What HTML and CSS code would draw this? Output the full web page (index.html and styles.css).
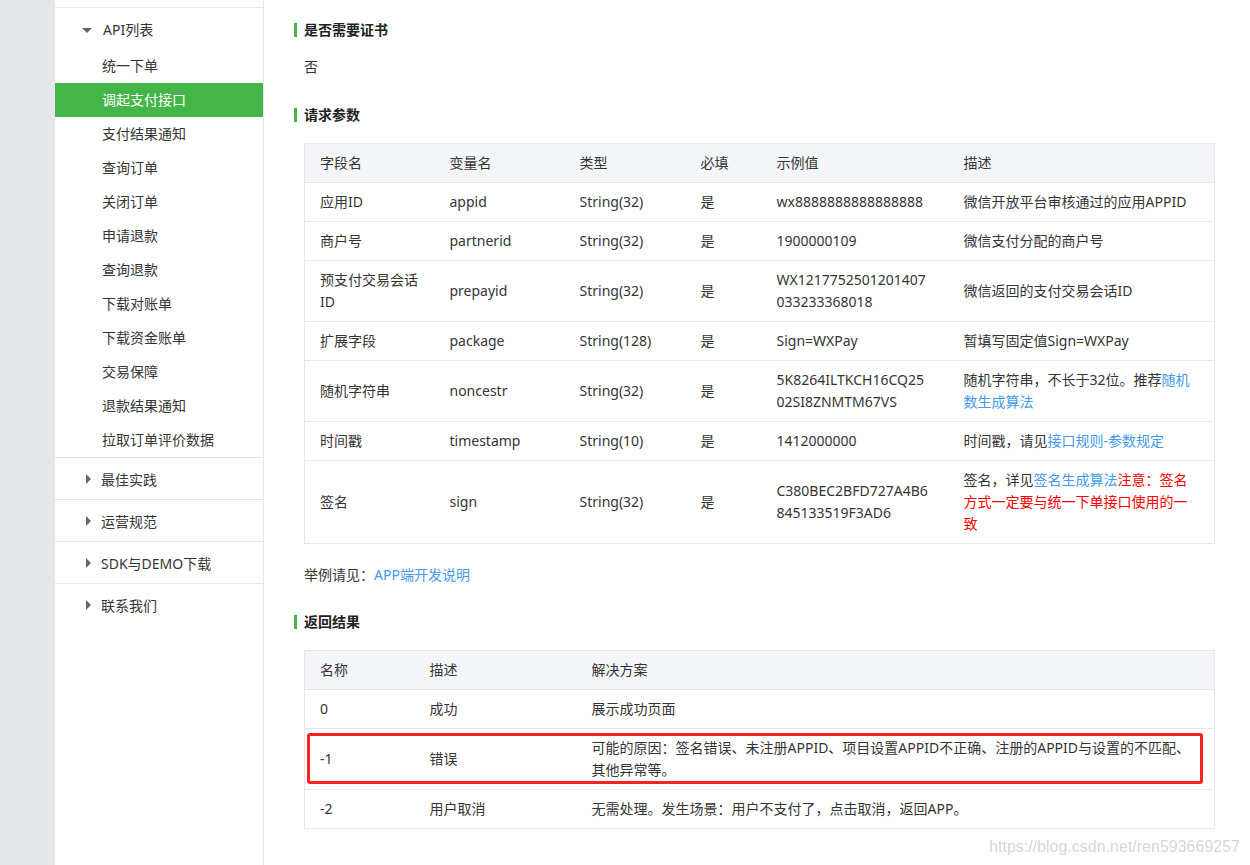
FILE: index.html
```html
<!DOCTYPE html>
<html lang="zh-CN">
<head>
<meta charset="utf-8">
<title>调起支付接口</title>
<link rel="stylesheet" href="styles.css">
</head>
<body>
<div class="page">
  <div class="rail"></div>
  <nav class="sidebar">
    <div class="nav-top"></div>
    <div class="nav-group open">
      <div class="nav-title"><span class="caret caret-down"></span>API列表</div>
      <ul class="nav-items">
        <li>统一下单</li>
        <li class="active">调起支付接口</li>
        <li>支付结果通知</li>
        <li>查询订单</li>
        <li>关闭订单</li>
        <li>申请退款</li>
        <li>查询退款</li>
        <li>下载对账单</li>
        <li>下载资金账单</li>
        <li>交易保障</li>
        <li>退款结果通知</li>
        <li>拉取订单评价数据</li>
      </ul>
    </div>
    <div class="nav-group"><div class="nav-title closed"><span class="caret caret-right"></span>最佳实践</div></div>
    <div class="nav-group"><div class="nav-title closed"><span class="caret caret-right"></span>运营规范</div></div>
    <div class="nav-group"><div class="nav-title closed"><span class="caret caret-right"></span>SDK与DEMO下载</div></div>
    <div class="nav-group last"><div class="nav-title closed"><span class="caret caret-right"></span>联系我们</div></div>
  </nav>
  <main class="content">
    <h3 class="sec-title">是否需要证书</h3>
    <p class="text">否</p>

    <h3 class="sec-title sec-gap">请求参数</h3>
    <div class="table-wrap">
      <table class="doc-table params">
        <colgroup>
          <col class="c1"><col class="c2"><col class="c3"><col class="c4"><col class="c5"><col class="c6">
        </colgroup>
        <thead>
          <tr><th>字段名</th><th>变量名</th><th>类型</th><th>必填</th><th>示例值</th><th>描述</th></tr>
        </thead>
        <tbody>
          <tr><td>应用ID</td><td>appid</td><td>String(32)</td><td>是</td><td>wx8888888888888888</td><td>微信开放平台审核通过的应用APPID</td></tr>
          <tr><td>商户号</td><td>partnerid</td><td>String(32)</td><td>是</td><td>1900000109</td><td>微信支付分配的商户号</td></tr>
          <tr><td>预支付交易会话ID</td><td>prepayid</td><td>String(32)</td><td>是</td><td>WX1217752501201407<br>033233368018</td><td>微信返回的支付交易会话ID</td></tr>
          <tr><td>扩展字段</td><td>package</td><td>String(128)</td><td>是</td><td>Sign=WXPay</td><td>暂填写固定值Sign=WXPay</td></tr>
          <tr><td>随机字符串</td><td>noncestr</td><td>String(32)</td><td>是</td><td>5K8264ILTKCH16CQ25<br>02SI8ZNMTM67VS</td><td>随机字符串，不长于32位。推荐<a class="link" href="#">随机数生成算法</a></td></tr>
          <tr><td>时间戳</td><td>timestamp</td><td>String(10)</td><td>是</td><td>1412000000</td><td>时间戳，请见<a class="link" href="#">接口规则-参数规定</a></td></tr>
          <tr><td>签名</td><td>sign</td><td>String(32)</td><td>是</td><td>C380BEC2BFD727A4B6<br>845133519F3AD6</td><td>签名，详见<a class="link" href="#">签名生成算法</a><span class="warn">注意：签名方式一定要与统一下单接口使用的一致</span></td></tr>
        </tbody>
      </table>
    </div>

    <p class="text note">举例请见：<a class="link" href="#">APP端开发说明</a></p>

    <h3 class="sec-title sec-gap2">返回结果</h3>
    <div class="table-wrap">
      <table class="doc-table results">
        <colgroup>
          <col class="r1"><col class="r2"><col class="r3">
        </colgroup>
        <thead>
          <tr><th>名称</th><th>描述</th><th>解决方案</th></tr>
        </thead>
        <tbody>
          <tr><td>0</td><td>成功</td><td>展示成功页面</td></tr>
          <tr><td>-1</td><td>错误</td><td>可能的原因：签名错误、未注册APPID、项目设置APPID不正确、注册的APPID与设置的不匹配、其他异常等。</td></tr>
          <tr><td>-2</td><td>用户取消</td><td>无需处理。发生场景：用户不支付了，点击取消，返回APP。</td></tr>
        </tbody>
      </table>
      <div class="highlight-box"></div>
    </div>
  </main>
</div>
<div class="watermark">https://blog.csdn.net/ren593669257</div>
</body>
</html>
```

FILE: styles.css
```css
* { box-sizing: border-box; }

html, body {
  margin: 0;
  padding: 0;
  background: #ffffff;
}

body {
  font-family: "Noto Sans", "Noto Sans CJK SC", sans-serif;
  font-size: 14px;
  color: #353535;
  overflow: hidden;
}

.page {
  display: flex;
  min-height: 865px;
}

.rail {
  width: 55px;
  flex: 0 0 55px;
  background: #e6e7eb;
}

.sidebar {
  width: 209px;
  flex: 0 0 209px;
  border-right: 1px solid #e6e6e6;
  background: #fff;
}

.nav-top {
  height: 8px;
  border-bottom: 1px solid #e6e6e6;
}

.nav-group {
  border-bottom: 1px solid #e6e6e6;
}

.nav-group.last {
  border-bottom: none;
}

.nav-title {
  display: flex;
  align-items: center;
  height: 41px;
  padding-left: 27px;
  color: #353535;
}

.nav-title.closed {
  padding-left: 31px;
}

.caret {
  display: inline-block;
  width: 0;
  height: 0;
}

.caret-down {
  border-left: 5px solid transparent;
  border-right: 5px solid transparent;
  border-top: 5px solid #666;
  margin-right: 11px;
  margin-top: 3px;
}

.caret-right {
  border-top: 5px solid transparent;
  border-bottom: 5px solid transparent;
  border-left: 5px solid #666;
  margin-right: 10px;
  margin-top: 1px;
}

.nav-items {
  list-style: none;
  margin: 0;
  padding: 0;
}

.nav-items li {
  height: 34px;
  line-height: 34px;
  padding-left: 47px;
  color: #353535;
  white-space: nowrap;
}

.nav-items li.active {
  background: #44b549;
  color: #fff;
}

.content {
  flex: 1;
  padding: 19px 36px 0 30px;
}

.sec-title {
  display: flex;
  align-items: center;
  margin: 0;
  font-size: 14px;
  line-height: 22px;
  font-weight: bold;
  color: #222;
}

.sec-title::before {
  content: "";
  width: 3px;
  height: 14px;
  background: #44b549;
  margin-right: 7px;
}

.sec-gap { margin-top: 26px; }
.sec-gap2 { margin-top: 25px; }

.text {
  margin: 15px 0 0 10px;
  line-height: 22px;
}

.note {
  margin-top: 20px;
}

.link {
  color: #459ae9;
  text-decoration: none;
}

.warn {
  color: #ff0000;
}

.table-wrap {
  position: relative;
  margin: 17px 0 0 10px;
}

.doc-table {
  width: 910px;
  table-layout: fixed;
  border-collapse: collapse;
  border: 1px solid #e7e7eb;
}

.doc-table th,
.doc-table td {
  text-align: left;
  vertical-align: middle;
  font-weight: normal;
  line-height: 22px;
  padding: 8px 14px 8px 15px;
  border-bottom: 1px solid #e7e7eb;
  color: #353535;
}

.doc-table th {
  background: #f4f5f9;
}

.results th,
.results td {
  padding-right: 10px;
}

.c1 { width: 130px; }
.c2 { width: 130px; }
.c3 { width: 121px; }
.c4 { width: 76px; }
.c5 { width: 187px; }
.c6 { width: 266px; }

.r1 { width: 110px; }
.r2 { width: 162px; }
.r3 { width: 638px; }

.highlight-box {
  position: absolute;
  top: 83px;
  left: 3px;
  width: 896px;
  height: 51px;
  border: 3px solid #ff2020;
  border-radius: 3px;
  pointer-events: none;
}

.watermark {
  position: fixed;
  right: 10px;
  bottom: 9px;
  font-family: "Liberation Sans", Arial, sans-serif;
  font-size: 16px;
  color: #d6d6d6;
  white-space: nowrap;
}
```
